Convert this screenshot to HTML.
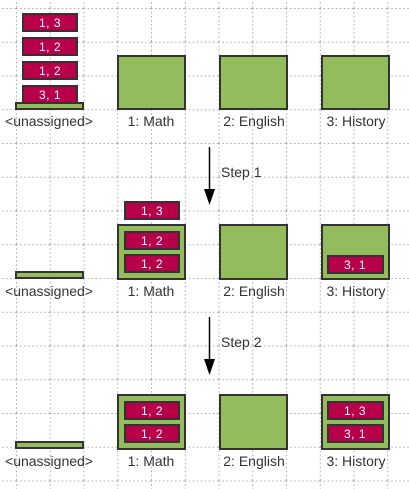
<!DOCTYPE html>
<html><head><style>
html,body{margin:0;padding:0;background:#fff;}
svg{display:block}
text{font-family:"Liberation Sans",Arial,sans-serif;}
.lbl{font-size:14px;fill:#333;}
.it{font-size:12px;fill:#fff;letter-spacing:0.5px}
</style></head><body>
<svg width="409" height="489" viewBox="0 0 409 489" xmlns="http://www.w3.org/2000/svg">
<defs>
<pattern id="g" x="16" y="8" width="33.75" height="33.75" patternUnits="userSpaceOnUse">
<line x1="0.5" y1="0" x2="0.5" y2="33.75" stroke="#aaa" stroke-width="1" stroke-dasharray="1.5,2.5"/>
<line x1="0" y1="0.5" x2="33.75" y2="0.5" stroke="#aaa" stroke-width="1" stroke-dasharray="1.5,2.5"/>
</pattern>
</defs>
<rect width="409" height="489" fill="url(#g)"/>
<g stroke="#333" stroke-width="2" fill="#93bc5c">
<rect x="16" y="103" width="67" height="6"/>
<rect x="118" y="56" width="67" height="53"/>
<rect x="220" y="56" width="67" height="53"/>
<rect x="322" y="56" width="67" height="53"/>
<rect x="16" y="272" width="67" height="6"/>
<rect x="118" y="225" width="67" height="54"/>
<rect x="220" y="225" width="67" height="54"/>
<rect x="322" y="225" width="67" height="54"/>
<rect x="16" y="442" width="67" height="6"/>
<rect x="118" y="395" width="67" height="54"/>
<rect x="220" y="395" width="67" height="54"/>
<rect x="322" y="395" width="67" height="54"/>
</g>
<g fill="#b8004a" stroke="#333" stroke-width="2">
<rect x="23" y="14" width="54" height="17"/>
<rect x="23" y="38" width="54" height="17"/>
<rect x="23" y="62" width="54" height="17"/>
<rect x="23" y="86" width="54" height="17"/>
<rect x="125" y="202" width="54" height="17"/>
<rect x="125" y="232" width="54" height="17"/>
<rect x="125" y="255" width="54" height="17"/>
<rect x="328" y="256" width="55" height="17"/>
<rect x="125" y="402" width="54" height="17"/>
<rect x="125" y="425" width="54" height="17"/>
<rect x="328" y="402" width="55" height="17"/>
<rect x="328" y="425" width="55" height="17"/>
</g>
<g class="it" text-anchor="middle">
<text x="50" y="27">1, 3</text>
<text x="50" y="51">1, 2</text>
<text x="50" y="75">1, 2</text>
<text x="50" y="99">3, 1</text>
<text x="152" y="215">1, 3</text>
<text x="152" y="245">1, 2</text>
<text x="152" y="268">1, 2</text>
<text x="355" y="269">3, 1</text>
<text x="152" y="415">1, 2</text>
<text x="152" y="438">1, 2</text>
<text x="355" y="415">1, 3</text>
<text x="355" y="438">3, 1</text>
</g>
<g class="lbl" text-anchor="middle">
<text x="49" y="126">&lt;unassigned&gt;</text>
<text x="151" y="126">1: Math</text>
<text x="254" y="126">2: English</text>
<text x="356" y="126">3: History</text>
<text x="49" y="296">&lt;unassigned&gt;</text>
<text x="151" y="296">1: Math</text>
<text x="254" y="296">2: English</text>
<text x="356" y="296">3: History</text>
<text x="49" y="466">&lt;unassigned&gt;</text>
<text x="151" y="466">1: Math</text>
<text x="254" y="466">2: English</text>
<text x="356" y="466">3: History</text>
</g>
<g stroke="#000" stroke-width="1.5">
<line x1="209.5" y1="147" x2="209.5" y2="192"/>
<line x1="209.5" y1="317" x2="209.5" y2="362"/>
</g>
<polygon points="204,189 215,189 209.5,205" fill="#000"/>
<polygon points="204,359 215,359 209.5,375" fill="#000"/>
<text class="lbl" x="221" y="177">Step 1</text>
<text class="lbl" x="221" y="347">Step 2</text>
</svg>
</body></html>
